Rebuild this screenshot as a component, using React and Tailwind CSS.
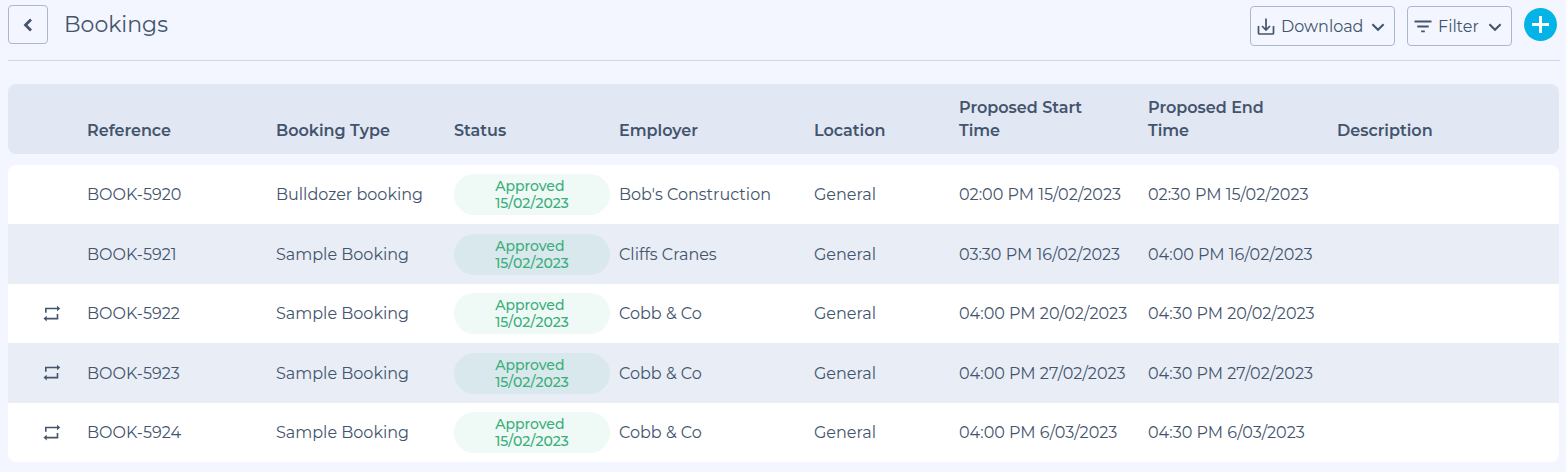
const bookings = [
    { reference: 'BOOK-5920', type: 'Bulldozer booking', approved: '15/02/2023', employer: "Bob's Construction", location: 'General', start: '02:00 PM 15/02/2023', end: '02:30 PM 15/02/2023', repeats: false },
    { reference: 'BOOK-5921', type: 'Sample Booking', approved: '15/02/2023', employer: 'Cliffs Cranes', location: 'General', start: '03:30 PM 16/02/2023', end: '04:00 PM 16/02/2023', repeats: false },
    { reference: 'BOOK-5922', type: 'Sample Booking', approved: '15/02/2023', employer: 'Cobb & Co', location: 'General', start: '04:00 PM 20/02/2023', end: '04:30 PM 20/02/2023', repeats: true },
    { reference: 'BOOK-5923', type: 'Sample Booking', approved: '15/02/2023', employer: 'Cobb & Co', location: 'General', start: '04:00 PM 27/02/2023', end: '04:30 PM 27/02/2023', repeats: true },
    { reference: 'BOOK-5924', type: 'Sample Booking', approved: '15/02/2023', employer: 'Cobb & Co', location: 'General', start: '04:00 PM 6/03/2023', end: '04:30 PM 6/03/2023', repeats: true },
];

const columns = [
    { label: 'Reference', width: 'w-[189px]' },
    { label: 'Booking Type', width: 'w-[178px]' },
    { label: 'Status', width: 'w-[165px]' },
    { label: 'Employer', width: 'w-[195px]' },
    { label: 'Location', width: 'w-[145px]' },
    { label: 'Proposed Start Time', width: 'w-[189px]' },
    { label: 'Proposed End Time', width: 'w-[189px]' },
    { label: 'Description', width: 'w-auto' },
];

const ChevronDown = () => (
    <svg className="w-[14px] h-[14px]" viewBox="0 0 14 14" fill="none" stroke="currentColor" strokeWidth="2" aria-hidden="true">
        <path d="M1.4 4.2 7 9.8l5.6-5.6" />
    </svg>
);

const DownloadIcon = () => (
    <svg className="w-[18px] h-[18px]" viewBox="0 0 18 18" fill="none" stroke="currentColor" strokeWidth="1.7" aria-hidden="true">
        <path d="M1.5 8v7q0 1 1 1h13q1 0 1-1V8M9 .5v11.3M5 8l4 4 4-4" />
    </svg>
);

const FilterIcon = () => (
    <svg className="w-[18px] h-[18px]" viewBox="0 0 18 18" fill="none" stroke="currentColor" strokeWidth="1.8" aria-hidden="true">
        <path d="M0.5 3.5h17M3.3 8.5h11.4M7.2 13.3h3.6" />
    </svg>
);

const RepeatIcon = () => (
    <svg className="w-[18px] h-[18px]" viewBox="0 0 18 18" role="img" aria-label="Repeats">
        <path d="M2.8 7.8V3.5h12M14.5 9v4.6H3" fill="none" stroke="currentColor" strokeWidth="1.6" />
        <path d="M14 0.7 17.2 3.5 14 6.3zM3.7 10.8.5 13.6l3.2 2.8z" fill="currentColor" />
    </svg>
);

const StatusBadge = ({ date }) => (
    <div className="flex justify-center w-[156px] pt-1 pb-[3px] rounded-full bg-[#33b57a]/8 text-sm leading-[17px] font-medium text-[#3aae7b]">
        <div>
            <div>Approved</div>
            <div>{date}</div>
        </div>
    </div>
);

const Header = () => (
    <header className="flex items-start justify-between pt-[5px] pr-[3px] h-[61px] border-b border-[#cfd7e6]">
        <div className="flex items-center gap-4">
            <button type="button" aria-label="Back" className="flex items-center justify-center w-10 h-[39px] rounded border border-[#abb6cf]">
                <svg className="w-4 h-4" viewBox="0 0 16 16" fill="none" stroke="currentColor" strokeWidth="2.8" aria-hidden="true">
                    <path d="M11 2.5 5.5 8l5.5 5.5" />
                </svg>
            </button>
            <h1 className="text-[22px] leading-8">Bookings</h1>
        </div>

        <div className="flex items-start gap-3 text-base">
            <button type="button" className="flex items-center justify-between w-[145px] h-10 mt-px pt-[2px] pl-[6px] pr-[9px] rounded border border-[#abb6cf]">
                <span className="flex items-center gap-[6px]">
                    <DownloadIcon />
                    Download
                </span>
                <ChevronDown />
            </button>
            <button type="button" className="flex items-center justify-between w-[105px] h-10 mt-px pt-[2px] pl-[6px] pr-[9px] rounded border border-[#abb6cf]">
                <span className="flex items-center gap-[6px]">
                    <FilterIcon />
                    Filter
                </span>
                <ChevronDown />
            </button>
            <button type="button" aria-label="Add booking" className="flex items-center justify-center w-[33px] h-[33px] mt-[3px] rounded-full bg-[#04b4e6] text-white">
                <svg className="w-[17px] h-[17px]" viewBox="0 0 17 17" stroke="currentColor" strokeWidth="3" aria-hidden="true">
                    <path d="M8.5 0v17M0 8.5h17" />
                </svg>
            </button>
        </div>
    </header>
);

const App = () => {
    return (
        <div className="min-h-screen bg-[#f3f6fe] pl-2 pr-[6px] pb-[10px] font-['Montserrat','Inter',sans-serif] text-[#43546d]">
            <Header />

            {/* Bookings table */}
            <main className="mt-[23px] pr-px overflow-x-auto">
                <table className="w-full table-fixed text-left text-base leading-[23px]">
                    <colgroup>
                        <col className="w-[79px]" />
                        {columns.map((column) => (
                            <col key={column.label} className={column.width} />
                        ))}
                    </colgroup>
                    <thead>
                        <tr className="h-[70px] align-bottom">
                            <td className="rounded-l-lg bg-[#e1e7f3]"></td>
                            {columns.map((column) => (
                                <th key={column.label} scope="col" className="pb-3 pr-10 font-semibold bg-[#e1e7f3] last:rounded-r-lg">
                                    {column.label}
                                </th>
                            ))}
                        </tr>
                        <tr aria-hidden="true" className="h-[11px]">
                            <td colSpan={9}></td>
                        </tr>
                    </thead>
                    <tbody>
                        {bookings.map((booking) => (
                            <tr key={booking.reference} className="group odd:h-[59px] even:h-[60px] *:bg-white even:*:bg-[#e8edf6] whitespace-nowrap">
                                <td className="pl-[35px] group-first:rounded-tl-lg group-last:rounded-bl-lg">
                                    {booking.repeats && <RepeatIcon />}
                                </td>
                                <td>{booking.reference}</td>
                                <td>{booking.type}</td>
                                <td><StatusBadge date={booking.approved} /></td>
                                <td>{booking.employer}</td>
                                <td>{booking.location}</td>
                                <td>{booking.start}</td>
                                <td>{booking.end}</td>
                                <td className="group-first:rounded-tr-lg group-last:rounded-br-lg"></td>
                            </tr>
                        ))}
                    </tbody>
                </table>
            </main>
        </div>
    );
};

export default App;
